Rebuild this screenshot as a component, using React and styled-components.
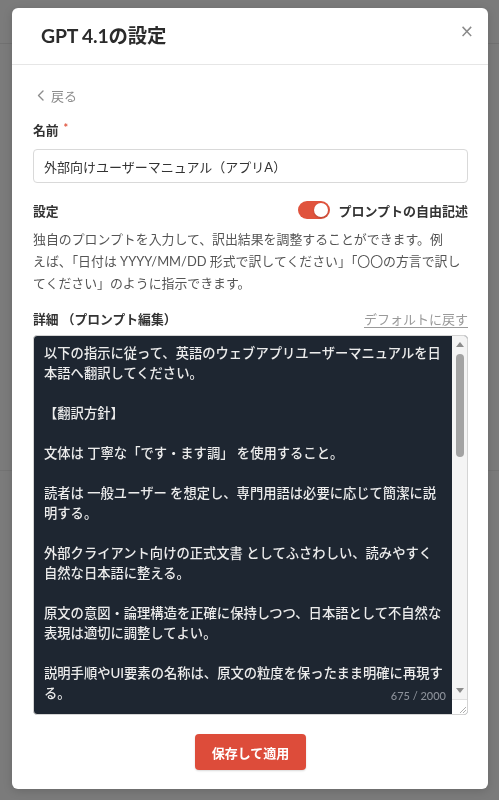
import React from "react";
import styled, { createGlobalStyle } from "styled-components";

const GlobalStyle = createGlobalStyle`
  html, body {
    margin: 0;
    padding: 0;
  }
  body {
    font-family: "Lato", "Noto Sans CJK JP", sans-serif;
    background: #7b7b7b;
  }
`;

const font = `"Lato", "Noto Sans CJK JP", sans-serif`;

// the page sitting under the dimmed overlay
const Backdrop = styled.div`
  height: 800px;
  background: #7b7b7b;
  display: flex;
  flex-direction: column;
`;

const BackdropHeader = styled.div`
  height: 43px;
  border-bottom: 1px solid #717171;
`;

const BackdropBand = styled.div`
  height: 426px;
  border-bottom: 1px solid #737373;
`;

const Overlay = styled.div`
  position: fixed;
  inset: 0;
  display: flex;
  justify-content: center;
  align-items: flex-start;
  padding-top: 8px;
`;

const Modal = styled.div`
  width: 476px;
  margin-left: 1px;
  background: #fff;
  border-radius: 6px;
  box-shadow: 0 2px 10px rgba(0, 0, 0, 0.15);
  display: flex;
  flex-direction: column;
`;

const ModalHeader = styled.div`
  height: 56px;
  padding: 0 14px 0 29px;
  display: flex;
  align-items: center;
  justify-content: space-between;
  border-bottom: 1px solid #e6e6e6;
`;

const Title = styled.h2`
  margin: 0;
  font-family: ${font};
  font-size: 19.4px;
  font-weight: 700;
  color: #2b2b2b;
  letter-spacing: -0.2px;
  padding-bottom: 4px;
`;

const CloseButton = styled.button`
  border: 0;
  background: none;
  padding: 0;
  margin-top: -10px;
  font-size: 17px;
  line-height: 1;
  color: #8a8a8a;
  cursor: pointer;
  font-family: "DejaVu Sans", sans-serif;
`;

const Body = styled.div`
  padding: 20px 20px 19px 21px;
  display: flex;
  flex-direction: column;
`;

const BackLink = styled.a`
  display: flex;
  align-items: center;
  gap: 7px;
  height: 20px;
  padding-left: 4px;
  font-family: ${font};
  font-size: 13px;
  color: #8c8c8c;
  text-decoration: none;
  cursor: pointer;
`;

const Label = styled.div`
  display: flex;
  align-items: center;
  gap: 5px;
  height: 20px;
  margin-top: ${(p) => p.$top || 0}px;
  font-family: ${font};
  font-size: 12.8px;
  font-weight: 700;
  color: #333;
`;

const Required = styled.span`
  color: #e0533d;
  font-size: 11px;
  align-self: flex-start;
  margin-top: 2px;
`;

const TextInput = styled.input`
  box-sizing: border-box;
  margin-top: 10px;
  width: 100%;
  height: 34px;
  padding: 0 10px;
  border: 1px solid #d9d9d9;
  border-radius: 4px;
  font-family: ${font};
  font-size: 13px;
  color: #333;
  outline: none;
`;

const Row = styled.div`
  display: flex;
  align-items: center;
  justify-content: space-between;
  height: 20px;
  margin-top: ${(p) => p.$top || 0}px;
`;

const ToggleWrap = styled.label`
  display: flex;
  align-items: center;
  gap: 8px;
  font-family: ${font};
  font-size: 13px;
  font-weight: 700;
  color: #333;
  cursor: pointer;
`;

const Switch = styled.span`
  width: 32px;
  height: 18px;
  border-radius: 9px;
  background: ${(p) => (p.$on ? "#e0533d" : "#ccc")};
  display: flex;
  align-items: center;
  justify-content: ${(p) => (p.$on ? "flex-end" : "flex-start")};
  padding: 0 2px;
  box-sizing: border-box;
`;

const Knob = styled.span`
  width: 14px;
  height: 14px;
  border-radius: 50%;
  background: #fff;
  box-shadow: 0 1px 2px rgba(0, 0, 0, 0.2);
`;

const Description = styled.p`
  margin: 8px 0 0;
  font-family: ${font};
  font-size: 12.9px;
  line-height: 22px;
  color: #555;
  white-space: nowrap;
`;

const ResetLink = styled.a`
  font-family: ${font};
  font-size: 13px;
  font-weight: 400;
  color: #9a9a9a;
  text-decoration: underline;
  text-underline-offset: 3px;
  cursor: pointer;
`;

const Editor = styled.div`
  margin-top: 7px;
  height: 380px;
  box-sizing: border-box;
  border: 1px solid #d4d4d4;
  border-radius: 4px;
  background: #1e2631;
  display: flex;
  overflow: hidden;
`;

const EditorText = styled.div`
  position: relative;
  flex: 1;
  padding: 7px 0 0 10px;
  font-family: ${font};
  font-size: 13.3px;
  font-weight: 500;
  line-height: 20px;
  color: #ececec;
  white-space: pre;
  overflow: hidden;
`;

const Counter = styled.span`
  position: absolute;
  right: 6px;
  bottom: 8px;
  font-family: ${font};
  font-size: 11px;
  color: #8b9099;
`;

const Scrollbar = styled.div`
  width: 15px;
  background: #f4f4f4;
  display: flex;
  flex-direction: column;
  align-items: center;
`;

const Arrow = styled.span`
  width: 0;
  height: 0;
  border-left: 4px solid transparent;
  border-right: 4px solid transparent;
  ${(p) =>
    p.$down
      ? "border-top: 5px solid #8c8c8c; margin: 6px 0;"
      : "border-bottom: 5px solid #8c8c8c; margin: 6px 0;"}
`;

const Track = styled.div`
  flex: 1;
  width: 100%;
  display: flex;
  justify-content: center;
`;

const Thumb = styled.span`
  width: 8px;
  height: 103px;
  margin-top: 1px;
  border-radius: 4px;
  background: #a3a3a3;
`;

const Resizer = styled.div`
  height: 14px;
  width: 100%;
  background: #fff;
  border-top: 1px solid #e0e0e0;
  display: flex;
  justify-content: flex-end;
  align-items: flex-end;
`;

const Footer = styled.div`
  display: flex;
  justify-content: center;
  margin-top: 19px;
`;

const SaveButton = styled.button`
  width: 111px;
  height: 36px;
  border: 0;
  border-radius: 4px;
  background: #dd4c3a;
  color: #fff;
  font-family: ${font};
  font-size: 13px;
  font-weight: 700;
  cursor: pointer;
  box-shadow: 0 1px 2px rgba(0, 0, 0, 0.15);
`;

const promptLines = [
  "以下の指示に従って、英語のウェブアプリユーザーマニュアルを日",
  "本語へ翻訳してください。",
  "",
  "【翻訳方針】",
  "",
  "文体は 丁寧な「です・ます調」 を使用すること。",
  "",
  "読者は 一般ユーザー を想定し、専門用語は必要に応じて簡潔に説",
  "明する。",
  "",
  "外部クライアント向けの正式文書 としてふさわしい、読みやすく",
  "自然な日本語に整える。",
  "",
  "原文の意図・論理構造を正確に保持しつつ、日本語として不自然な",
  "表現は適切に調整してよい。",
  "",
  "説明手順やUI要素の名称は、原文の粒度を保ったまま明確に再現す",
  "る。",
];

function ChevronLeft() {
  return (
    <svg width="7" height="11" viewBox="0 0 7 11" fill="none">
      <polyline
        points="6,1 1.5,5.5 6,10"
        stroke="#8c8c8c"
        strokeWidth="1.4"
        strokeLinecap="round"
        strokeLinejoin="round"
      />
    </svg>
  );
}

function Grip() {
  return (
    <svg width="8" height="8" viewBox="0 0 8 8">
      <line x1="7" y1="1" x2="1" y2="7" stroke="#9a9a9a" strokeWidth="0.8" />
      <line x1="7" y1="4" x2="4" y2="7" stroke="#9a9a9a" strokeWidth="0.8" />
    </svg>
  );
}

export default function App() {
  return (
    <>
      <GlobalStyle />
      <Backdrop>
        <BackdropHeader />
        <BackdropBand />
      </Backdrop>
      <Overlay>
        <Modal>
          <ModalHeader>
            <Title>GPT 4.1の設定</Title>
            <CloseButton aria-label="閉じる">×</CloseButton>
          </ModalHeader>
          <Body>
            <BackLink>
              <ChevronLeft />
              戻る
            </BackLink>

            <Label $top={14}>
              名前<Required>*</Required>
            </Label>
            <TextInput defaultValue="外部向けユーザーマニュアル（アプリA）" />

            <Row $top={17}>
              <Label>設定</Label>
              <ToggleWrap>
                <Switch $on>
                  <Knob />
                </Switch>
                プロンプトの自由記述
              </ToggleWrap>
            </Row>
            <Description>
              独自のプロンプトを入力して、訳出結果を調整することができます。例
              <br />
              えば、「日付は YYYY/MM/DD 形式で訳してください」「〇〇の方言で訳し
              <br />
              てください」のように指示できます。
            </Description>

            <Row $top={14}>
              <Label>詳細 （プロンプト編集）</Label>
              <ResetLink>デフォルトに戻す</ResetLink>
            </Row>
            <Editor>
              <EditorText>
                {promptLines.join("\n")}
                <Counter>675 / 2000</Counter>
              </EditorText>
              <Scrollbar>
                <Arrow />
                <Track>
                  <Thumb />
                </Track>
                <Arrow $down />
                <Resizer>
                  <Grip />
                </Resizer>
              </Scrollbar>
            </Editor>

            <Footer>
              <SaveButton>保存して適用</SaveButton>
            </Footer>
          </Body>
        </Modal>
      </Overlay>
    </>
  );
}
